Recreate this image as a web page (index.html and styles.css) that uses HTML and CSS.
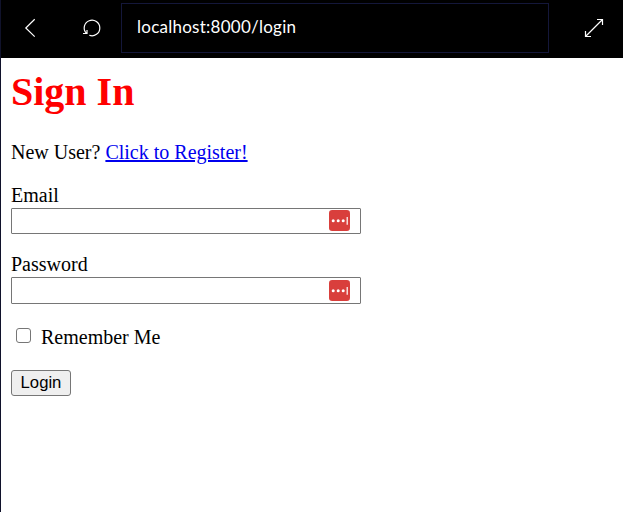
FILE: index.html
```html
<!DOCTYPE html>
<html lang="en">
<head>
<meta charset="utf-8">
<title>Sign In</title>
<link rel="stylesheet" href="styles.css">
</head>
<body>
<header class="toolbar">
  <svg class="icon back" viewBox="0 0 20 20"><path d="M14.7 1.3 5.8 10l8.9 8.6"/></svg>
  <svg class="icon reload" viewBox="0 0 20 20"><path d="M5.2 15.2A7.8 7.8 0 1 1 8.3 17.3M2 15.5h4V12"/></svg>
  <div class="address">localhost:8000/login</div>
  <svg class="icon expand" viewBox="0 0 20 20"><path d="M1.5 18.5 18.5 1.5M13 1.5h5.5V7M1.5 13v5.5H7"/></svg>
</header>
<main class="page">
  <h1>Sign In</h1>
  <p class="register">New User? <a href="#">Click to Register!</a></p>
  <form>
    <div class="field email">
      <label for="email">Email</label>
      <div class="input-box">
        <input id="email" type="text">
        <svg class="manager" viewBox="0 0 21 21"><rect width="21" height="21" rx="3.2"/><g><circle cx="4.2" cy="10.7" r="1.5"/><circle cx="9.2" cy="10.7" r="1.5"/><circle cx="14.2" cy="10.7" r="1.5"/><path d="M17.6 7h1.2v7.8h-1.2z"/></g></svg>
      </div>
    </div>
    <div class="field password">
      <label for="password">Password</label>
      <div class="input-box">
        <input id="password" type="password">
        <svg class="manager" viewBox="0 0 21 21"><rect width="21" height="21" rx="3.2"/><g><circle cx="4.2" cy="10.7" r="1.5"/><circle cx="9.2" cy="10.7" r="1.5"/><circle cx="14.2" cy="10.7" r="1.5"/><path d="M17.6 7h1.2v7.8h-1.2z"/></g></svg>
      </div>
    </div>
    <div class="remember">
      <input id="remember" type="checkbox">
      <label for="remember">Remember Me</label>
    </div>
    <button class="login" type="button">Login</button>
  </form>
</main>
</body>
</html>
```
FILE: styles.css
```css
* { box-sizing: border-box; }
body {
  margin: 0;
  height: 512px;
  overflow: hidden;
  border-left: 1px solid #10122b;
  background: #fff;
  color: #000;
  font: 20px/23px "Liberation Serif", serif;
}
.toolbar {
  display: flex;
  align-items: center;
  height: 58px;
  padding: 0 19px 2px;
  background: #000;
}
.icon {
  flex: none;
  width: 20px;
  height: 20px;
  fill: none;
  stroke: #fff;
  stroke-width: 1.2;
}
.reload { margin: 0 20px 0 41px; }
.address {
  width: 428px;
  height: 50px;
  padding-left: 15px;
  border: 1px solid #14173a;
  color: #fff;
  font: 17px/46px Lato, sans-serif;
  letter-spacing: 0.25px;
}
.expand { margin-left: auto; }
.page { padding: 11px 10px; }
h1 {
  margin: 0 0 26px;
  color: #f00;
  font-size: 40px;
  line-height: 46px;
}
.register { margin: 0 0 20px; }
a { color: #00e; text-decoration: underline; }
.field { width: 350px; }
.field label { display: block; height: 24px; }
.email { margin-bottom: 19px; }
.password { margin-bottom: 22px; }
.input-box { position: relative; height: 26px; }
.password .input-box { height: 27px; }
.input-box input {
  display: block;
  width: 100%;
  height: 100%;
  margin: 0;
  padding: 1px 2px;
  border: 1px solid #767676;
  border-radius: 1px;
  background: #fff;
}
.manager {
  position: absolute;
  top: 2px;
  right: 11.5px;
  width: 21px;
  height: 21px;
  fill: #d93f3c;
}
.password .manager { top: 3px; }
.manager g { fill: #fff; }
.remember {
  display: flex;
  gap: 10px;
  margin-bottom: 21px;
  padding-left: 5px;
}
.remember input {
  appearance: none;
  width: 15px;
  height: 15px;
  margin: 2px 0 0;
  border: 1px solid #767676;
  border-radius: 3px;
  background: #fff;
}
.login {
  display: block;
  width: 60px;
  height: 26px;
  padding: 0;
  border: 1px solid #767676;
  border-radius: 3px;
  background: #efefef;
  color: #000;
  font: 16.67px/24px "Liberation Sans", Arial, sans-serif;
}
```
